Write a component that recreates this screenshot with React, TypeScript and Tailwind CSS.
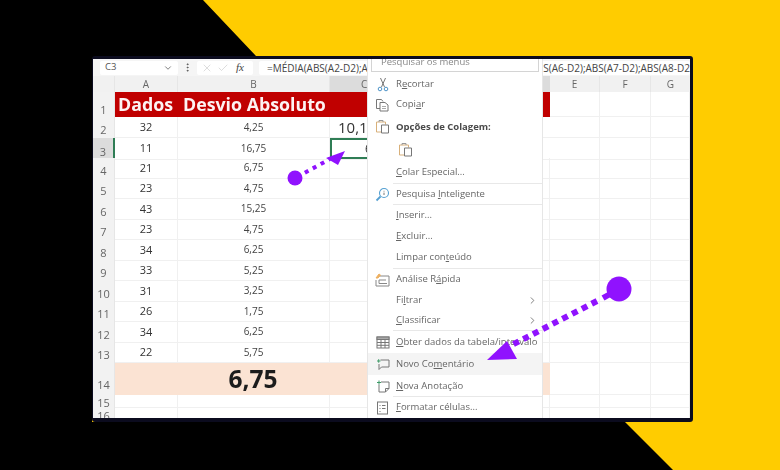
import { ReactNode } from 'react';
import { ChevronDown, ChevronRight, EllipsisVertical, X, Check } from 'lucide-react';

const rows = [
  ['2', '32', '4,25'],
  ['3', '11', '16,75'],
  ['4', '21', '6,75'],
  ['5', '23', '4,75'],
  ['6', '43', '15,25'],
  ['7', '23', '4,75'],
  ['8', '34', '6,25'],
  ['9', '33', '5,25'],
  ['10', '31', '3,25'],
  ['11', '26', '1,75'],
  ['12', '34', '6,25'],
  ['13', '22', '5,75'],
];

const cols = 'grid grid-cols-[22px_63px_152px_220px_50px_51px_39px]';

function Num({ children, active, pb = 'pb-[3px]' }: { children: ReactNode; active?: boolean; pb?: string }) {
  return (
    <div
      className={
        'flex items-end justify-center text-[11px] leading-none text-[#666] ' +
        pb +
        (active ? ' bg-[#dcdcdc] border-r-2 border-[#2f7d55]' : ' bg-[#f2f2f2] border-r border-[#e6e6e6]')
      }
    >
      {children}
    </div>
  );
}

function Blank({ className = '' }: { className?: string }) {
  return <div className={'border-r border-b border-[#f0f0f0] ' + className} />;
}

function Scissors() {
  return (
    <svg width="14" height="15" viewBox="0 0 14 15" fill="none" strokeWidth="1">
      <path d="M4.500 1l4 9M9.500 1l-4 9" stroke="#777" />
      <circle cx="4" cy="12" r="1.800" stroke="#4f94c8" />
      <circle cx="10" cy="12" r="1.800" stroke="#4f94c8" />
    </svg>
  );
}

function CopyIcon() {
  return (
    <svg width="15" height="14" viewBox="0 0 15 14" fill="none" stroke="#777" strokeWidth="1">
      <path d="M5 10.500H1.500V1.500h5L8 3.500" />
      <path d="M5 4.500h5l3 2.500v6H5z" fill="#fff" />
      <path d="M7 8.500h4M7 10.500h4" stroke="#aaa" />
    </svg>
  );
}

function PasteIcon() {
  return (
    <svg width="16" height="16" viewBox="0 0 16 16" fill="none" strokeWidth="1">
      <path d="M6 13H1.500V3h9v2.500" stroke="#d8b07a" />
      <path d="M4 3V1.500h4V3" stroke="#999" />
      <path d="M6.500 6h7v8h-7z" stroke="#777" fill="#fff" />
    </svg>
  );
}

function SearchIcon() {
  return (
    <svg width="15" height="15" viewBox="0 0 15 15" fill="none" stroke="#55a0d2" strokeWidth="1.100">
      <circle cx="9" cy="6" r="4.500" />
      <path d="M5.500 9.500L1.500 13.500" strokeWidth="1.800" />
      <path d="M9 3.800v.800M9 5.600v2.400" stroke="#777" strokeWidth="1" />
    </svg>
  );
}

function AnalysisIcon() {
  return (
    <svg width="15" height="14" viewBox="0 0 15 14" fill="none" stroke="#888" strokeWidth="1">
      <path d="M3 3h11v10H1V7" />
      <path d="M4 10.500V7h7M4 10.500h8" />
      <path d="M1 5l3-4 1.500 1L3 5z" fill="#eeb060" stroke="#eeb060" />
    </svg>
  );
}

function TableIcon() {
  return (
    <svg width="14" height="13" viewBox="0 0 14 13" fill="none" stroke="#777" strokeWidth="1">
      <rect x="1" y="1" width="12" height="11" />
      <rect x="1" y="1" width="12" height="2.500" fill="#aaa" />
      <path d="M1 6.500h12M1 9.300h12M5 3.500V12M9 3.500V12" />
    </svg>
  );
}

function CommentIcon() {
  return (
    <svg width="14" height="13" viewBox="0 0 14 13" fill="none" stroke="#777" strokeWidth="1">
      <path d="M4.500 2H13v7H5.500l-2.500 2.500V6" />
      <path d="M1 3h3.500M2.700 1.200v3.500" stroke="#3f9a68" />
    </svg>
  );
}

function NoteIcon() {
  return (
    <svg width="14" height="13" viewBox="0 0 14 13" fill="none" stroke="#777" strokeWidth="1">
      <path d="M3 4.500V12h6.500L13 8.500V2H5" />
      <path d="M9.500 12V8.500H13" />
      <path d="M1 2.500h4M3 .5v4" stroke="#3f9a68" />
    </svg>
  );
}

function FormatIcon() {
  return (
    <svg width="13" height="14" viewBox="0 0 13 14" fill="none" stroke="#777" strokeWidth="1">
      <rect x="1.500" y="1" width="10" height="12" />
      <path d="M3.500 4.500h1M3.500 7.500h1M3.500 10.500h1M6 4.500h3.500M6 7.500h3.500" />
    </svg>
  );
}

function MenuItem({
  h,
  icon,
  children,
  arrow,
  sep,
  hover,
  bold,
}: {
  h: string;
  icon?: ReactNode;
  children?: ReactNode;
  arrow?: boolean;
  sep?: boolean;
  hover?: boolean;
  bold?: boolean;
}) {
  return (
    <div className={'flex items-center relative ' + h + (hover ? ' bg-[#f4f4f4]' : '')}>
      <div className="w-[28px] shrink-0 flex justify-center pl-[1px]">{icon}</div>
      <div className={'flex-1 text-[9.5px] ' + (bold ? 'font-bold text-[#4a4a4a]' : 'text-[#666]')}>{children}</div>
      {arrow && <ChevronRight className="w-[11px] h-[11px] mr-[4px] text-[#777]" />}
      {sep && <div className="absolute left-[25px] right-0 bottom-0 h-px bg-[#e8e8e8]" />}
    </div>
  );
}

export default function App() {
  return (
    <div
      className="relative w-[780px] h-[470px] overflow-hidden bg-[#ffcc00] pl-[92px] pt-[56px]"
      style={{ fontFamily: '"Open Sans", "Noto Sans", sans-serif' }}
    >
      {/* corner shapes of the banner */}
      <svg className="absolute inset-0" width="780" height="470" viewBox="0 0 780 470">
        <path d="M0 0H203L256 56L92 60L92 422L0 470Z" fill="#000" />
        <path d="M0 422H625L673 470H0Z" fill="#000" />
      </svg>

      {/* spreadsheet window */}
      <div className="relative w-[601px] h-[366px] bg-white border-l border-[#0b0b1e] border-t-[3px] border-r-[3px] border-b-4 rounded-[3px] overflow-hidden blur-[0.3px]">
        {/* formula bar */}
        <div className="h-[17px] flex items-center bg-[#f5f5f5] pl-[7px] gap-[4px]">
          <div className="w-[78px] h-[14px] bg-white rounded-[2px] flex items-center justify-between px-[5px] text-[9.5px] text-[#555]">
            C3
            <ChevronDown className="w-[10px] h-[10px] text-[#666]" />
          </div>
          <EllipsisVertical className="w-[11px] h-[11px] text-[#555]" />
          <div className="w-[56px] h-[14px] bg-white rounded-[2px] flex items-center gap-[4px] px-[4px]">
            <X className="w-[12px] h-[12px] text-[#bbb]" strokeWidth={1} />
            <Check className="w-[12px] h-[12px] text-[#bbb]" strokeWidth={1} />
            <span className="ml-[3px] text-[11px] italic text-[#444]" style={{ fontFamily: '"Liberation Serif", serif' }}>
              fx
            </span>
          </div>
          <div className="flex-1 h-[14px] ml-[2px] bg-white rounded-[2px] pl-[8px] text-[10px] leading-[14px] text-[#444] whitespace-nowrap overflow-hidden flex justify-between">
            <span>=MÉDIA(ABS(A2-D2);A</span>
            <span>S(A6-D2);ABS(A7-D2);ABS(A8-D2</span>
          </div>
        </div>

        {/* sheet */}
        <div className={cols + ' h-[16px] bg-[#f1f1f1] text-[10px] text-[#666] text-center leading-[16px]'}>
          <div className="border-r border-[#e6e6e6]" />
          <div className="border-r border-[#e6e6e6]">A</div>
          <div className="border-r border-[#e6e6e6]">B</div>
          <div className="bg-[#dcdcdc] border-b border-[#7f9f8f] text-left pl-[31px]">C</div>
          <div className="border-r border-[#e6e6e6]">E</div>
          <div className="border-r border-[#e6e6e6]">F</div>
          <div>G</div>
        </div>

        <div className={cols + ' h-[25px]'}>
          <Num pb="pb-[2px]">1</Num>
          <div className="col-span-3 bg-[#c00000] text-[#fdf3f3] font-bold text-[17.8px] leading-[25px] flex whitespace-nowrap">
            <div className="w-[63px] pl-[3px]">Dados</div>
            <div className="pl-[5px]">Desvio Absoluto</div>
          </div>
          <Blank />
          <Blank />
          <Blank />
        </div>

        {rows.map(([n, a, b]) => (
          <div key={n} className={cols + ' h-[20.5px]'}>
            <Num active={n === '3'}>{n}</Num>
            <div className="flex items-center justify-center text-[11px] text-[#333] border-r border-b border-[#f0f0f0]">{a}</div>
            <div className="flex items-center justify-center text-[10px] text-[#444] border-r border-b border-[#f0f0f0]">{b}</div>
            {n === '2' ? (
              <div className="pl-[8px] text-[15px] leading-[20px] text-[#333] border-b border-[#f0f0f0]">10,11</div>
            ) : n === '3' ? (
              <div className="border-b border-[#f0f0f0]">
                <div className="w-[60px] h-full pl-[33px] text-[12px] leading-[17px] text-[#333] border-2 border-r-0 border-[#2f7d55]">6,75</div>
              </div>
            ) : (
              <Blank />
            )}
            <Blank />
            <Blank />
            <Blank />
          </div>
        ))}

        <div className={cols + ' h-[32px]'}>
          <Num pb="pb-[5px]">14</Num>
          <div className="col-span-3 bg-[#fbe3d3] flex">
            <div className="w-[276px] text-center text-[24.5px] font-bold leading-[32px] text-[#1c1c1c]">6,75</div>
          </div>
          <Blank />
          <Blank />
          <Blank />
        </div>
        {['15', '16'].map((n) => (
          <div key={n} className={cols + ' h-[13px]'}>
            <Num pb="pb-0">{n}</Num>
            <Blank />
            <Blank />
            <Blank />
            <Blank />
            <Blank />
            <Blank />
          </div>
        ))}

        {/* context menu */}
        <div className="absolute left-[274px] top-0 w-[176px] h-full bg-white border-x border-[#e6e6e6]">
          <div className="h-[13px] mx-[3px] border border-t-0 border-[#d4d4d4] pl-[9px] text-[9.5px] leading-[5px] text-[#888] overflow-hidden">
            Pesquisar os menus
          </div>
          <div className="h-[2px]" />
          <MenuItem h="h-[20px]" icon={<Scissors />}>R<u>e</u>cortar</MenuItem>
          <MenuItem h="h-[21px]" icon={<CopyIcon />}>Copi<u>a</u>r</MenuItem>
          <MenuItem h="h-[24px]" icon={<PasteIcon />} bold>Opções de Colagem:</MenuItem>
          <div className="h-[22px] pl-[30px] flex items-center"><PasteIcon /></div>
          <MenuItem h="h-[23px]" sep><u>C</u>olar Especial...</MenuItem>
          <MenuItem h="h-[21px]" icon={<SearchIcon />} sep>Pesquisa <u>I</u>nteligente</MenuItem>
          <MenuItem h="h-[21px]"><u>I</u>nserir...</MenuItem>
          <MenuItem h="h-[20px]"><u>E</u>xcluir...</MenuItem>
          <MenuItem h="h-[23px]" sep>Limpar con<u>t</u>eúdo</MenuItem>
          <MenuItem h="h-[21px]" icon={<AnalysisIcon />}>Análise R<u>á</u>pida</MenuItem>
          <MenuItem h="h-[20px]" arrow>Fi<u>l</u>trar</MenuItem>
          <MenuItem h="h-[21px]" arrow sep><u>C</u>lassificar</MenuItem>
          <MenuItem h="h-[22px]" icon={<TableIcon />}><u>O</u>bter dados da tabela/intervalo</MenuItem>
          <MenuItem h="h-[22px]" icon={<CommentIcon />} hover>Novo Co<u>m</u>entário</MenuItem>
          <MenuItem h="h-[22px]" icon={<NoteIcon />} sep><u>N</u>ova Anotação</MenuItem>
          <MenuItem h="h-[21px]" icon={<FormatIcon />}><u>F</u>ormatar células...</MenuItem>
        </div>
      </div>

      {/* purple arrows drawn over the screenshot */}
      <svg className="absolute inset-0 z-10" width="780" height="470" viewBox="0 0 780 470">
        <circle cx="295" cy="178" r="7.500" fill="#9012fe" />
        <path d="M297 177L330 159" stroke="#9012fe" strokeWidth="4" strokeDasharray="4 5" />
        <path d="M345 151L326 158L338 165Z" fill="#9012fe" />
        <circle cx="619" cy="289" r="12.500" fill="#9012fe" />
        <path d="M612 293L603 298" stroke="#9012fe" strokeWidth="6" />
        <path d="M597 301L508 347" stroke="#9012fe" strokeWidth="6" strokeDasharray="6 5" />
        <path d="M487 360L507 341L517 359Z" fill="#9012fe" />
      </svg>
    </div>
  );
}
